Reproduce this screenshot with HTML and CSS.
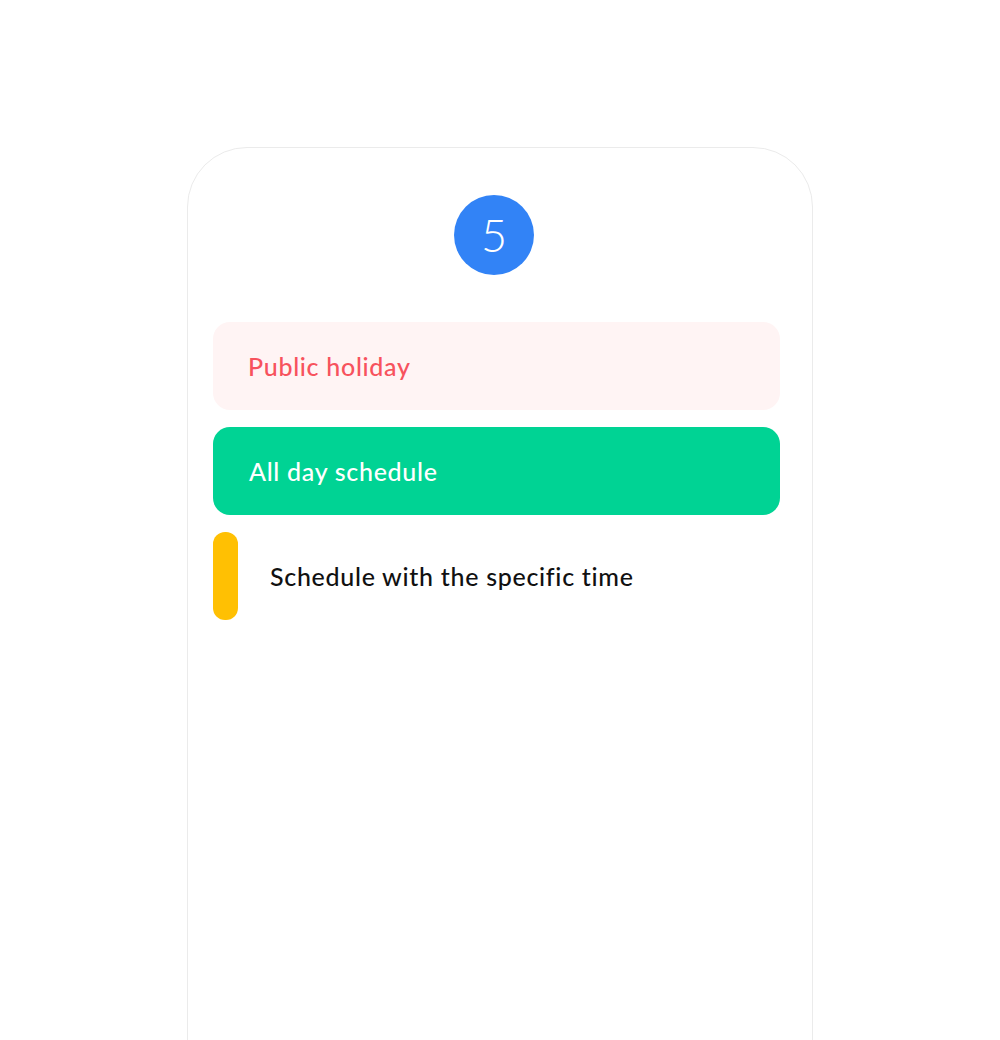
FILE: index.html
```html
<!DOCTYPE html>
<html lang="en">
<head>
<meta charset="utf-8">
<title>Schedule</title>
<link rel="stylesheet" href="styles.css">
</head>
<body>
<div class="phone">
  <div class="day-badge">5</div>
  <div class="events">
    <div class="event event-holiday">Public holiday</div>
    <div class="event event-allday">All day schedule</div>
    <div class="event event-timed">
      <span class="timed-bar"></span>
      <span class="timed-label">Schedule with the specific time</span>
    </div>
  </div>
</div>
</body>
</html>
```

FILE: styles.css
```css
html, body {
  margin: 0;
  padding: 0;
  background: #ffffff;
  overflow: hidden;
}

body {
  font-family: Lato, "Open Sans", sans-serif;
  height: 1040px;
}

.phone {
  box-sizing: border-box;
  margin: 147px 0 0 187px;
  width: 626px;
  height: 1000px;
  border: 1px solid #ebebeb;
  border-radius: 60px;
  padding: 47px 32px 0 25px;
  display: flex;
  flex-direction: column;
  align-items: center;
}

.day-badge {
  width: 80px;
  height: 80px;
  margin-right: 5px;
  border-radius: 50%;
  background: #3283f6;
  color: #ffffff;
  font-size: 45px;
  font-weight: 300;
  display: flex;
  align-items: center;
  justify-content: center;
  line-height: 1;
}

.events {
  align-self: stretch;
  margin-top: 47px;
  display: flex;
  flex-direction: column;
  gap: 17px;
}

.event {
  height: 88px;
  border-radius: 17px;
  display: flex;
  align-items: center;
  font-size: 25px;
  letter-spacing: 0.7px;
  font-weight: 500;
  box-sizing: border-box;
}

.event-holiday {
  background: #fff4f4;
  color: #f7525d;
  padding-left: 35px;
}

.event-allday {
  background: #00d394;
  color: #ffffff;
  padding-left: 36px;
}

.event-timed {
  color: #111111;
  gap: 32px;
}

.timed-bar {
  width: 25px;
  height: 88px;
  border-radius: 12px;
  background: #ffc003;
  flex: none;
}
```
